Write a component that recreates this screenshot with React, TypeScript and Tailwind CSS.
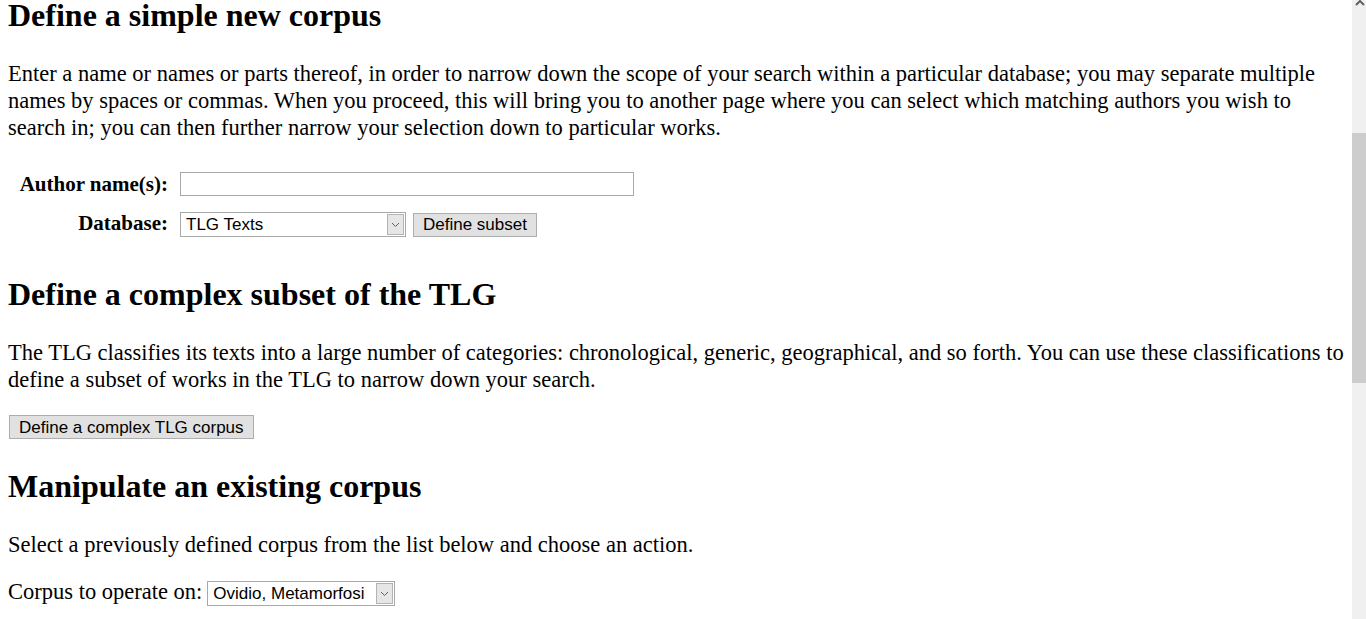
import React from "react";

function Chevron() {
  return (
    <svg width="9" height="6" viewBox="0 0 9 6" className="block">
      <polyline points="1,1 4.5,4.5 8,1" fill="none" stroke="#606060" strokeWidth="1" />
    </svg>
  );
}

function FakeSelect({ value, width }: { value: string; width: string }) {
  return (
    <div
      className={`${width} flex h-[25px] items-center border border-[#a9a9a9] bg-white pr-px font-['Liberation_Sans',Arial,sans-serif] text-[17px] text-black`}
    >
      <span className="flex-1 truncate pl-[5px] leading-none">{value}</span>
      <span className="flex h-[21px] w-[17px] items-center justify-center border border-[#b4b4b4] bg-[#e6e6e6]">
        <Chevron />
      </span>
    </div>
  );
}

function Btn({ children }: { children: React.ReactNode }) {
  return (
    <button className="flex h-[24px] items-center border border-[#adadad] bg-[#e1e1e1] px-[9px] font-['Liberation_Sans',Arial,sans-serif] text-[17px] leading-none text-black">
      {children}
    </button>
  );
}

export default function App() {
  return (
    <div className="flex h-[619px] w-[1366px] overflow-hidden bg-white font-['Liberation_Serif','Times_New_Roman',serif] text-black">
      <main className="flex-1 px-2">
        <h2 className="text-[32px] font-bold leading-[30px]">Define a simple new corpus</h2>
        <p className="mt-[30px] whitespace-nowrap text-[22.5px] leading-[27px]">
          Enter a name or names or parts thereof, in order to narrow down the scope of your search within a particular database; you may separate multiple
          <br />
          names by spaces or commas. When you proceed, this will bring you to another page where you can select which matching authors you wish to
          <br />
          search in; you can then further narrow your selection down to particular works.
        </p>

        <div className="mt-[31px] grid grid-cols-[160px_auto] gap-x-3 gap-y-[15px]">
          <div className="text-right text-[21px] font-bold leading-[24px]">Author name(s):</div>
          <div>
            <input className="block h-[24px] w-[454px] border border-[#a9a9a9] bg-white px-1 outline-none" />
          </div>
          <div className="text-right text-[21px] font-bold leading-[24px]">Database:</div>
          <div className="mt-px flex items-center gap-[7px]">
            <FakeSelect value="TLG Texts" width="w-[226px]" />
            <Btn>Define subset</Btn>
          </div>
        </div>

        <h2 className="mt-[41px] text-[32px] font-bold leading-[32px]">Define a complex subset of the TLG</h2>
        <p className="mt-[29px] whitespace-nowrap text-[22.5px] leading-[27px]">
          The TLG classifies its texts into a large number of categories: chronological, generic, geographical, and so forth. You can use these classifications to
          <br />
          define a subset of works in the TLG to narrow down your search.
        </p>
        <div className="mt-[22px] flex pl-px">
          <Btn>Define a complex TLG corpus</Btn>
        </div>

        <h2 className="mt-[31px] text-[32px] font-bold leading-[32px]">Manipulate an existing corpus</h2>
        <p className="mt-[29px] whitespace-nowrap text-[22.5px] leading-[27px]">
          Select a previously defined corpus from the list below and choose an action.
        </p>
        <div className="mt-[20px] flex items-start gap-[5px] text-[22.5px] leading-[27px]">
          <span className="whitespace-nowrap">Corpus to operate on:</span>
          <div className="mt-[3px]">
            <FakeSelect value="Ovidio, Metamorfosi" width="w-[188px]" />
          </div>
        </div>
      </main>

      <div className="flex w-4 shrink-0 flex-col bg-[#f0f0f0]">
        <div className="flex h-[133px] justify-center">
          <svg width="10" height="6" viewBox="0 0 10 6" className="block">
            <polyline points="1,5 5,1 9,5" fill="none" stroke="#606060" strokeWidth="2" />
          </svg>
        </div>
        <div className="h-[250px] bg-[#cdcdcd]" />
      </div>
    </div>
  );
}
